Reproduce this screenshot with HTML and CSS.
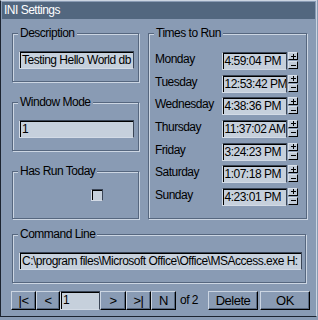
FILE: index.html
```html
<!DOCTYPE html>
<html lang="en">
<head>
    <meta charset="UTF-8">
    <title>INI Settings</title>
    <link rel="stylesheet" href="styles.css">
</head>
<body>
    <div class="window">
        <div class="titlebar">INI Settings</div>
        <div class="content">
            <div class="top">
                <div class="col-left">
                    <div class="group g-desc">
                        <div class="group-title">Description</div>
                        <div class="field wide-field">Testing Hello World db</div>
                    </div>
                    <div class="group g-mode">
                        <div class="group-title">Window Mode</div>
                        <div class="field wide-field">1</div>
                    </div>
                    <div class="group g-run">
                        <div class="group-title">Has Run Today</div>
                        <div class="check"></div>
                    </div>
                </div>
                <div class="group g-times">
                    <div class="group-title">Times to Run</div>
                    <div class="times">
                        <div class="time-row">
                            <span class="day">Monday</span>
                            <span class="field time">4:59:04 PM</span>
                            <span class="spin">
                                <span class="spin-btn"><svg width="5" height="5" viewBox="0 0 5 5"><path d="M0 2.5H5M2.5 0V5" stroke="#000" stroke-width="1"/></svg></span>
                                <span class="spin-btn"><svg width="5" height="5" viewBox="0 0 5 5"><path d="M0 2.5H5" stroke="#000" stroke-width="1"/></svg></span>
                            </span>
                        </div>
                        <div class="time-row">
                            <span class="day">Tuesday</span>
                            <span class="field time">12:53:42 PM</span>
                            <span class="spin">
                                <span class="spin-btn"><svg width="5" height="5" viewBox="0 0 5 5"><path d="M0 2.5H5M2.5 0V5" stroke="#000" stroke-width="1"/></svg></span>
                                <span class="spin-btn"><svg width="5" height="5" viewBox="0 0 5 5"><path d="M0 2.5H5" stroke="#000" stroke-width="1"/></svg></span>
                            </span>
                        </div>
                        <div class="time-row">
                            <span class="day">Wednesday</span>
                            <span class="field time">4:38:36 PM</span>
                            <span class="spin">
                                <span class="spin-btn"><svg width="5" height="5" viewBox="0 0 5 5"><path d="M0 2.5H5M2.5 0V5" stroke="#000" stroke-width="1"/></svg></span>
                                <span class="spin-btn"><svg width="5" height="5" viewBox="0 0 5 5"><path d="M0 2.5H5" stroke="#000" stroke-width="1"/></svg></span>
                            </span>
                        </div>
                        <div class="time-row">
                            <span class="day">Thursday</span>
                            <span class="field time">11:37:02 AM</span>
                            <span class="spin">
                                <span class="spin-btn"><svg width="5" height="5" viewBox="0 0 5 5"><path d="M0 2.5H5M2.5 0V5" stroke="#000" stroke-width="1"/></svg></span>
                                <span class="spin-btn"><svg width="5" height="5" viewBox="0 0 5 5"><path d="M0 2.5H5" stroke="#000" stroke-width="1"/></svg></span>
                            </span>
                        </div>
                        <div class="time-row">
                            <span class="day">Friday</span>
                            <span class="field time">3:24:23 PM</span>
                            <span class="spin">
                                <span class="spin-btn"><svg width="5" height="5" viewBox="0 0 5 5"><path d="M0 2.5H5M2.5 0V5" stroke="#000" stroke-width="1"/></svg></span>
                                <span class="spin-btn"><svg width="5" height="5" viewBox="0 0 5 5"><path d="M0 2.5H5" stroke="#000" stroke-width="1"/></svg></span>
                            </span>
                        </div>
                        <div class="time-row">
                            <span class="day">Saturday</span>
                            <span class="field time">1:07:18 PM</span>
                            <span class="spin">
                                <span class="spin-btn"><svg width="5" height="5" viewBox="0 0 5 5"><path d="M0 2.5H5M2.5 0V5" stroke="#000" stroke-width="1"/></svg></span>
                                <span class="spin-btn"><svg width="5" height="5" viewBox="0 0 5 5"><path d="M0 2.5H5" stroke="#000" stroke-width="1"/></svg></span>
                            </span>
                        </div>
                        <div class="time-row">
                            <span class="day">Sunday</span>
                            <span class="field time">4:23:01 PM</span>
                            <span class="spin">
                                <span class="spin-btn"><svg width="5" height="5" viewBox="0 0 5 5"><path d="M0 2.5H5M2.5 0V5" stroke="#000" stroke-width="1"/></svg></span>
                                <span class="spin-btn"><svg width="5" height="5" viewBox="0 0 5 5"><path d="M0 2.5H5" stroke="#000" stroke-width="1"/></svg></span>
                            </span>
                        </div>
                    </div>
                </div>
            </div>
            <div class="group g-cmd">
                <div class="group-title">Command Line</div>
                <div class="field cmd">C:\program files\Microsoft Office\Office\MSAccess.exe H:</div>
            </div>
            <div class="nav">
                <button class="btn b-first">|&lt;</button>
                <button class="btn b-prev">&lt;</button>
                <div class="field nav-field">1</div>
                <button class="btn b-next">&gt;</button>
                <button class="btn b-last">&gt;|</button>
                <button class="btn b-new">N</button>
                <span class="of">of 2</span>
                <button class="btn b-wide">Delete</button>
                <button class="btn b-wide">OK</button>
            </div>
        </div>
    </div>
</body>
</html>
```

FILE: styles.css
```css
/* Fenêtre style Windows, thème bleu-gris */
body {
    margin: 0;
    background-color: #899bb4;
    font-family: "Liberation Sans", Arial, sans-serif;
    font-size: 12px;
    letter-spacing: -0.5px;
    color: #000;
}
.window {
    width: 317px;
    height: 317px;
    box-sizing: border-box;
    padding: 1px;
    border: 1px solid;
    border-color: #cbd5e2 #cbd5e2 #1c2430 #1c2430;
}
.titlebar {
    height: 17px;
    line-height: 17px;
    padding-left: 2px;
    background-color: #52677f;
    color: #fff;
}
.content {
    padding: 14px 0 0 10px;
}
.top {
    display: flex;
    gap: 9px;
}
.col-left {
    width: 127px;
    display: flex;
    flex-direction: column;
    gap: 20px;
}

/* Cadres (group box) */
.group {
    box-sizing: border-box;
    border: 1px solid #56677f;
    box-shadow: inset 1px 1px 0 #ccd6e3, 1px 1px 0 #ccd6e3;
    padding: 0 4px 0 6px;
}
.group-title {
    width: fit-content;
    height: 14px;
    line-height: 14px;
    margin: -8px 0 0 -1px;
    padding: 0 2px;
    background-color: #899bb4;
}
.g-desc, .g-mode {
    height: 49px;
}
.g-run {
    height: 48px;
}
.g-times {
    width: 159px;
    height: 186px;
    padding: 0 8px 0 6px;
}
.g-cmd {
    width: 294px;
    height: 49px;
    margin-top: 15px;
}

/* Champs */
.field {
    display: block;
    box-sizing: border-box;
    height: 18px;
    line-height: 16px;
    padding-left: 2px;
    border: 1px solid;
    border-color: #3a4556 #3a4556 #d3dbe6 #d3dbe6;
    box-shadow: inset 1px 1px 0 #000;
    background-color: #c6d0dc;
    white-space: nowrap;
    overflow: hidden;
}
.wide-field {
    width: 115px;
    margin-top: 11px;
}
.check {
    width: 12px;
    height: 12px;
    box-sizing: border-box;
    margin: 11px 0 0 72px;
    border: 1px solid;
    border-color: #3a4556 #3a4556 #d3dbe6 #d3dbe6;
    box-shadow: inset 1px 1px 0 #000;
    background-color: #c6d0dc;
}
.cmd {
    width: 283px;
    margin-top: 11px;
}

/* Heures */
.times {
    margin-top: 12px;
    display: flex;
    flex-direction: column;
    gap: 4.67px;
}
.time-row {
    display: flex;
    align-items: flex-start;
    height: 18px;
}
.day {
    width: 67px;
    line-height: 14px;
}
.time {
    width: 66px;
}
.spin {
    display: flex;
    flex-direction: column;
    gap: 1px;
    width: 10px;
    margin-left: 1px;
}
.spin-btn {
    box-sizing: border-box;
    height: 8px;
    display: flex;
    align-items: center;
    justify-content: center;
    background-color: #c0cad7;
    border: 1px solid;
    border-color: #d8e0ea #000 #000 #d8e0ea;
}
.spin-btn svg {
    display: block;
    shape-rendering: crispEdges;
}

/* Barre de navigation */
.nav {
    display: flex;
    height: 19px;
    margin: 8px 0 0 -1px;
}
.btn {
    box-sizing: border-box;
    height: 19px;
    padding: 0;
    font-family: inherit;
    font-size: 13px;
    letter-spacing: -0.5px;
    color: #000;
    background-color: #899bb4;
    border: 1px solid;
    border-color: #cbd5e2 #000 #000 #cbd5e2;
    box-shadow: inset -1px -1px 0 #56677f;
}
.b-first, .b-last, .b-new {
    width: 25px;
}
.b-prev {
    width: 24px;
}
.b-next {
    width: 26px;
}
.nav-field {
    width: 40px;
    height: 19px;
}
.of {
    width: 32px;
    padding-left: 4px;
    box-sizing: border-box;
    line-height: 19px;
}
.b-wide {
    width: 50px;
    margin-right: 2px;
}
```
